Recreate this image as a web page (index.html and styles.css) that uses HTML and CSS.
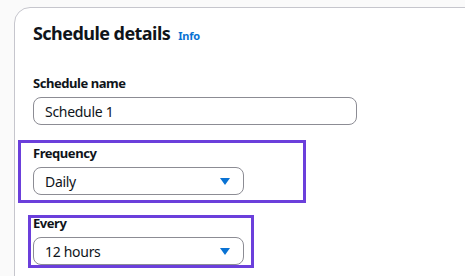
FILE: index.html
```html
<!DOCTYPE html>
<html lang="en">
<head>
    <meta charset="UTF-8">
    <meta name="viewport" content="width=device-width, initial-scale=1.0">
    <title>Schedule details</title>
    <link rel="stylesheet" href="styles.css">
</head>
<body>
  <div class="card">
    <div class="card-header">
      <h2>Schedule details</h2>
      <a class="info-link" href="#">Info</a>
    </div>

    <div class="form">
      <div class="field">
        <label class="field-label" for="scheduleName">Schedule name</label>
        <input type="text" id="scheduleName" class="text-input" value="Schedule 1">
      </div>

      <div class="field">
        <span class="highlight highlight-frequency"></span>
        <div class="field-label">Frequency</div>
        <div class="select">
          <span class="select-value">Daily</span>
          <span class="caret"></span>
        </div>
      </div>

      <div class="field">
        <span class="highlight highlight-every"></span>
        <div class="field-label">Every</div>
        <div class="select">
          <span class="select-value">12 hours</span>
          <span class="caret"></span>
        </div>
      </div>
    </div>
  </div>
</body>
</html>
```

FILE: styles.css
```css
* {
    box-sizing: border-box;
    margin: 0;
    padding: 0;
    font-family: "Noto Sans", "Open Sans", sans-serif;
}

body {
    background-color: #fafafa;
    overflow: hidden;
}

.card {
    margin: 7px 0 0 14px;
    width: 620px;
    min-height: 300px;
    background: white;
    border: 1px solid #c6c6cd;
    border-radius: 16px;
    padding: 13px 18px 20px;
}

.card-header {
    display: flex;
    align-items: baseline;
    gap: 8px;
}

.card-header h2 {
    font-size: 18px;
    line-height: 24px;
    font-weight: 700;
    letter-spacing: -0.55px;
    color: #0f141a;
}

.info-link {
    font-size: 11px;
    font-weight: 700;
    letter-spacing: -0.2px;
    color: #0972d3;
    text-decoration: none;
}

.form {
    display: flex;
    flex-direction: column;
    gap: 20px;
    margin-top: 30px;
}

.field {
    position: relative;
    width: 324px;
}

.field-label {
    display: block;
    font-size: 13px;
    line-height: 16px;
    font-weight: 700;
    letter-spacing: -0.45px;
    color: #0f141a;
    margin-bottom: 6px;
}

.text-input {
    display: block;
    width: 324px;
    height: 28px;
    border: 1px solid #8c8c94;
    border-radius: 8px;
    padding: 0 11px;
    font-family: "Noto Sans", "Open Sans", sans-serif;
    font-size: 14px;
    letter-spacing: -0.3px;
    color: #0f141a;
    background: white;
}

.select {
    display: flex;
    align-items: center;
    justify-content: space-between;
    width: 211px;
    height: 28px;
    border: 1px solid #8c8c94;
    border-radius: 8px;
    padding: 0 13px 0 11px;
    font-size: 14px;
    letter-spacing: -0.3px;
    color: #0f141a;
}

.caret {
    width: 0;
    height: 0;
    border-left: 5px solid transparent;
    border-right: 5px solid transparent;
    border-top: 7px solid #0972d3;
}

/* annotation boxes drawn over the fields */
.highlight {
    position: absolute;
    border: 3px solid #6b3fdb;
    pointer-events: none;
}

.highlight-frequency {
    left: -15px;
    top: -5px;
    width: 288px;
    height: 63px;
}

.highlight-every {
    left: -5px;
    top: 0;
    width: 226px;
    height: 53px;
}
```
